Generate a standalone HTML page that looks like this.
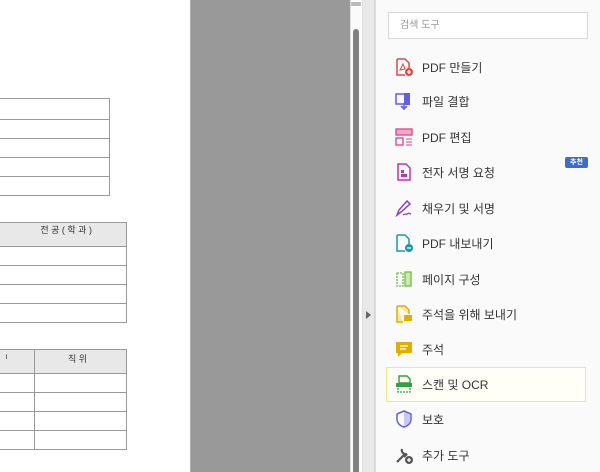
<!DOCTYPE html>
<html><head><meta charset="utf-8"><style>
*{margin:0;padding:0;box-sizing:border-box}
body{width:600px;height:472px;overflow:hidden;position:relative;background:#fff;font-family:"Liberation Sans","Noto Sans CJK KR",sans-serif}
.a{position:absolute}
.t{position:absolute;border:1px solid #999;border-left:none}
.r{position:absolute;left:0;border-top:1px solid #999}
.item{position:absolute;left:394px;height:24px;display:flex;align-items:center;font-size:12px;color:#333}
.item svg{width:20px;height:20px;margin-right:8px}
</style></head><body>
<div class="a" style="left:0;top:0;width:190px;height:472px;background:#fff"></div>
<div class="t" style="left:0;top:98px;width:110px;height:98px"></div>
<div class="r" style="top:119px;width:110px"></div>
<div class="r" style="top:138px;width:110px"></div>
<div class="r" style="top:157px;width:110px"></div>
<div class="r" style="top:176px;width:110px"></div>

<div class="t" style="left:0;top:222px;width:127px;height:101px"></div>
<div class="a" style="left:0;top:223px;width:126px;height:23px;background:#e8e8e8;font-size:9px;color:#333;text-align:right;padding-right:34px;line-height:14px">전 공 ( 학 과 )</div>
<div class="r" style="top:246px;width:127px"></div>
<div class="r" style="top:265px;width:127px"></div>
<div class="r" style="top:284px;width:127px"></div>
<div class="r" style="top:303px;width:127px"></div>

<div class="t" style="left:0;top:349px;width:127px;height:101px"></div>
<div class="a" style="left:0;top:350px;width:126px;height:23px;background:#e8e8e8"></div>
<div class="a" style="left:0;top:352px;font-size:9px;color:#333">ᅵ</div>
<div class="a" style="left:68px;top:352px;font-size:9px;color:#333">직 위</div>
<div class="r" style="top:373px;width:127px"></div>
<div class="r" style="top:392px;width:127px"></div>
<div class="r" style="top:411px;width:127px"></div>
<div class="r" style="top:430px;width:127px"></div>
<div class="a" style="left:34px;top:349px;height:101px;border-left:1px solid #999"></div>

<div class="a" style="left:190px;top:0;width:160px;height:472px;background:#999;border-left:1px solid #aaa"></div>
<div class="a" style="left:350px;top:0;width:12px;height:472px;background:#fafafa;border-left:1px solid #ddd"></div>
<div class="a" style="left:351px;top:2px;width:10px;height:4px;background:#bbb"></div>
<div class="a" style="left:353px;top:29px;width:6px;height:443px;background:#808080;border-radius:3px 3px 0 0"></div>
<div class="a" style="left:362px;top:0;width:13px;height:472px;background:#e8e8e8;border-left:1px solid #ddd;border-right:1px solid #d4d4d4"></div>
<div class="a" style="left:366px;top:311px;width:0;height:0;border-left:5px solid #666;border-top:4px solid transparent;border-bottom:4px solid transparent"></div>

<div class="a" style="left:375px;top:0;width:225px;height:472px;background:#fafafa;border-left:1px solid #ddd"></div>
<div class="a" style="left:388px;top:12px;width:200px;height:27px;background:#fff;border:1px solid #d8d8d8;font-size:10px;color:#999;padding-left:11px;line-height:25px">검색 도구</div>
<div class="a" style="left:565px;top:157px;width:23px;height:11px;background:#3d6fc8;border-radius:2px;color:#fff;font-size:7px;text-align:center;line-height:11px;font-weight:bold">추천</div>
<div class="a" style="left:386px;top:367px;width:200px;height:35px;border:1px solid #f1ea7a;background:#fffff8"></div>

<div class="item" style="top:55px"><svg viewBox="0 0 20 20"><path d="M3 2h8l4 4v5M3 2v16h8" fill="none" stroke="#e04848" stroke-width="1.5"/><path d="M6 13l3-6 2 5z" fill="none" stroke="#e04848" stroke-width="1"/><circle cx="15" cy="15" r="4" fill="#e04848"/><path d="M13 15h4M15 13v4" stroke="#fff" stroke-width="1.3"/></svg>PDF 만들기</div>
<div class="item" style="top:89px"><svg viewBox="0 0 20 20"><rect x="2" y="3" width="10" height="10" fill="none" stroke="#6060e0" stroke-width="1.5"/><path d="M10 2h6v12h-6z" fill="#6060e0"/><path d="M10 12v6M7 15l3 3 3-3" stroke="#6060e0" stroke-width="1.6" fill="none"/></svg>파일 결합</div>
<div class="item" style="top:125px"><svg viewBox="0 0 20 20"><rect x="2" y="2" width="16" height="6" fill="#f4a6c4" stroke="#e0408a" stroke-width="1.3"/><rect x="2" y="11" width="7" height="7" fill="none" stroke="#e0408a" stroke-width="1.3"/><path d="M12 12h6M12 15h6M12 18h6" stroke="#e0408a" stroke-width="1"/></svg>PDF 편집</div>
<div class="item" style="top:160px"><svg viewBox="0 0 20 20"><path d="M4 2h8l4 4v12H4z" fill="none" stroke="#c030c0" stroke-width="1.5"/><rect x="7" y="8" width="3" height="3" fill="#c030c0"/><rect x="7" y="12" width="6" height="3" fill="#c030c0"/></svg>전자 서명 요청</div>
<div class="item" style="top:196px"><svg viewBox="0 0 20 20"><path d="M3 17l2-5 8-9 3 3-9 8z" fill="none" stroke="#8a40d0" stroke-width="1.5"/><path d="M9 17c2-2 3 0 4-1s2-1 4 0" stroke="#8a40d0" stroke-width="1.3" fill="none"/></svg>채우기 및 서명</div>
<div class="item" style="top:231px"><svg viewBox="0 0 20 20"><path d="M3 2h8l4 4v5M3 2v16h8" fill="none" stroke="#1a9aa0" stroke-width="1.5"/><circle cx="15" cy="15" r="4" fill="#1a9aa0"/><path d="M13 15h4" stroke="#fff" stroke-width="1.3"/></svg>PDF 내보내기</div>
<div class="item" style="top:267px"><svg viewBox="0 0 20 20"><rect x="3" y="4" width="6" height="13" fill="none" stroke="#70c040" stroke-width="1.3" stroke-dasharray="2 1"/><rect x="11" y="3" width="6" height="14" fill="#c8eab0" stroke="#70c040" stroke-width="1.3"/></svg>페이지 구성</div>
<div class="item" style="top:302px"><svg viewBox="0 0 20 20"><path d="M3 2h8l4 4v4M3 2v16h6" fill="#f7e9a0" stroke="#e0b000" stroke-width="1.5"/><rect x="10" y="11" width="8" height="6" fill="#e0b000"/></svg>주석을 위해 보내기</div>
<div class="item" style="top:337px"><svg viewBox="0 0 20 20"><path d="M2 3h16v11H8l-4 4v-4H2z" fill="#e0b000"/><path d="M6 7h8M6 10h6" stroke="#fff" stroke-width="1.3"/></svg>주석</div>
<div class="item" style="top:372px"><svg viewBox="0 0 20 20"><path d="M5 2h8l3 3v4H5z" fill="none" stroke="#30a040" stroke-width="1.4"/><rect x="2" y="9" width="16" height="4" fill="#30a040"/><path d="M4 14v4h12v-4" fill="none" stroke="#30a040" stroke-width="1.3" stroke-dasharray="2 1"/></svg>스캔 및 OCR</div>
<div class="item" style="top:407px"><svg viewBox="0 0 20 20"><path d="M10 2l7 3v5c0 4-3 7-7 8-4-1-7-4-7-8V5z" fill="none" stroke="#6060e0" stroke-width="1.5"/><path d="M10 3v14c3-1 6-3 6-7V6z" fill="#c8c8f4"/></svg>보호</div>
<div class="item" style="top:443px"><svg viewBox="0 0 20 20"><path d="M3 17l7-7M8 4a4 4 0 0 0 5 5l-3 3" stroke="#555" stroke-width="2.2" fill="none"/><circle cx="15" cy="15" r="4" fill="#555"/><path d="M13 15h4M15 13v4" stroke="#fff" stroke-width="1.3"/></svg>추가 도구</div>
</body></html>
